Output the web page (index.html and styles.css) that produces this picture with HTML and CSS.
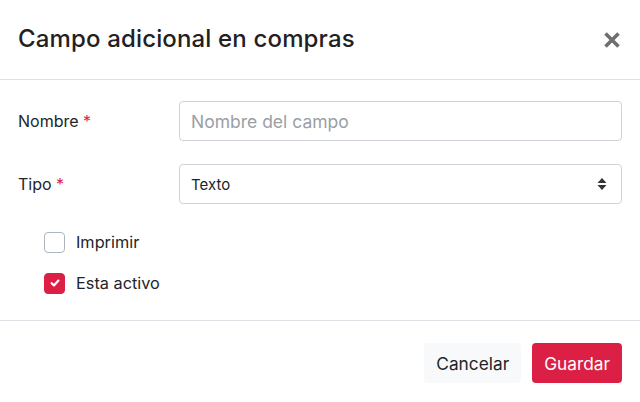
FILE: index.html
```html
<!DOCTYPE html>
<html lang="es">
<head>
<meta charset="utf-8">
<link rel="stylesheet" href="styles.css">
</head>
<body>
<div class="modal">
  <div class="modal-header">
    <h1 class="title">Campo adicional en compras</h1>
    <button class="close" aria-label="Cerrar">
      <svg width="18" height="18" viewBox="0 0 18 18"><path d="M2.5 2.5 L15.5 15.5 M15.5 2.5 L2.5 15.5" stroke="#6f6f6f" stroke-width="3.6" stroke-linecap="butt"/></svg>
    </button>
  </div>
  <div class="modal-body">
    <div class="row">
      <label class="label">Nombre <span class="req">*</span></label>
      <input class="control" type="text" placeholder="Nombre del campo">
    </div>
    <div class="row">
      <label class="label">Tipo <span class="req">*</span></label>
      <div class="control select">
        <span>Texto</span>
        <svg width="10" height="14" viewBox="0 0 10 14"><path d="M5 1 L9.5 6 H0.5 Z M5 13 L9.5 8 H0.5 Z" fill="#333"/></svg>
      </div>
    </div>
    <div class="checks">
      <label class="check"><span class="box"></span>Imprimir</label>
      <label class="check"><span class="box on"><svg width="12" height="12" viewBox="0 0 12 12"><path d="M2.6 6.2 L5 8.4 L9.4 3.6" fill="none" stroke="#fff" stroke-width="2.2" stroke-linecap="round" stroke-linejoin="round"/></svg></span>Esta activo</label>
    </div>
  </div>
  <div class="modal-footer">
    <button class="btn btn-light">Cancelar</button>
    <button class="btn btn-primary">Guardar</button>
  </div>
</div>
</body>
</html>
```

FILE: styles.css
```css
* { box-sizing: border-box; }
html, body { margin: 0; padding: 0; background: #fff; }
body { font-family: Inter, "Noto Sans", Arial, sans-serif; color: #212529; width: 640px; height: 402px; overflow: hidden; }
.modal { width: 640px; }
.modal-header { height: 80px; display: flex; align-items: center; justify-content: space-between; padding: 0 19px 0 18px; border-bottom: 1px solid #dee2e6; }
.title { margin: 0; font-size: 24px; font-weight: 500; letter-spacing: 0.15px; color: #1f2124; padding-bottom: 2px; }
.close { border: 0; background: none; padding: 0; width: 18px; height: 18px; display: flex; align-items: center; justify-content: center; }
.modal-body { padding: 21px 18px 27px 18px; border-bottom: 1px solid #dee2e6; }
.row { display: flex; align-items: center; margin-bottom: 23px; }
.label { width: 161px; font-size: 16px; color: #212529; }
.req { color: #dc1f44; }
.control { flex: 1; height: 40px; border: 1px solid #ced4da; border-radius: 4px; padding: 0 11px; font-family: inherit; font-size: 17.5px; color: #212529; background: #fff; }
.control::placeholder { color: #9aa0a6; }
.select { display: flex; align-items: center; justify-content: space-between; font-size: 15px; padding: 0 14px 0 11px; }
.checks { padding-left: 26px; display: flex; flex-direction: column; gap: 21px; margin-top: 28px; }
.check { display: flex; align-items: center; font-size: 16.3px; gap: 11px; height: 20px; }
.box { width: 21px; height: 21px; border: 1px solid #adb5bd; border-radius: 4px; display: flex; align-items: center; justify-content: center; }
.box.on { background: #dc1f44; border-color: #dc1f44; }
.modal-footer { display: flex; justify-content: flex-end; gap: 11px; padding: 22px 18px; }
.btn { height: 40px; border: 0; border-radius: 4px; font-family: inherit; font-size: 17.3px; padding: 0 12px; }
.btn-light { background: #f8f9fa; color: #212529; }
.btn-primary { background: #dc1f44; color: #fff; }
```
